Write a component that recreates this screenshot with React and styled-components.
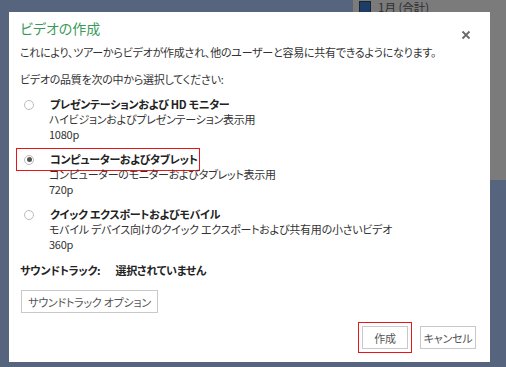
import React from "react";
import styled, { createGlobalStyle } from "styled-components";

const Global = createGlobalStyle`
  html, body { margin: 0; padding: 0; }
  body {
    font-family: "Noto Sans CJK JP", "Noto Sans", sans-serif;
    font-feature-settings: "palt";
  }
`;

const Page = styled.div`
  position: relative;
  width: 506px;
  height: 367px;
  overflow: hidden;
  background: #56657d;
  padding: 12px 0 0 9px;
  box-sizing: border-box;
`;

const Legend = styled.div`
  position: absolute;
  top: 0;
  right: 0;
  width: 153px;
  height: 180px;
  background: #7b7b7b;
  display: flex;
  align-items: flex-start;
  gap: 7px;
  padding: 1px 0 0 6px;
  box-sizing: border-box;
  color: #2e2e2e;
  font-size: 11.5px;
  line-height: 13px;
`;

const Swatch = styled.span`
  width: 10px;
  height: 11px;
  background: #1d3d66;
  border: 1px solid #1a2533;
`;

const Dialog = styled.div`
  position: relative;
  width: 481px;
  height: 350px;
  background: #fff;
  box-sizing: border-box;
  padding: 0 0 0 11px;
  display: flex;
  flex-direction: column;
`;

const Title = styled.div`
  color: #3a9a5b;
  font-size: 14px;
  line-height: 18px;
  margin-top: 7px;
`;

const Close = styled.button`
  position: absolute;
  top: 16px;
  right: 17px;
  width: 14px;
  height: 14px;
  border: 0;
  padding: 0;
  background: transparent;
  display: flex;
  align-items: center;
  justify-content: center;
`;

const Text = styled.div`
  font-size: 11px;
  letter-spacing: -0.25px;
  line-height: 15px;
  white-space: nowrap;
  color: ${(p) => p.$color || "#333"};
  font-weight: ${(p) => (p.$bold ? 700 : 400)};
  margin-top: ${(p) => p.$mt || 0}px;
`;

const OptionList = styled.div`
  display: flex;
  flex-direction: column;
  gap: 10px;
  margin-top: 10px;
`;

const Option = styled.div`
  display: flex;
  flex-direction: column;
`;

const OptionHead = styled.div`
  display: flex;
  align-items: center;
  gap: 16px;
  padding-left: 4px;
  height: 15px;
  width: 176px;
  box-sizing: border-box;
  outline: ${(p) => (p.$highlight ? "1.5px solid #e8151b" : "none")};
  outline-offset: 3px;
`;

const Radio = styled.span`
  width: 10px;
  height: 10px;
  border-radius: 50%;
  border: 1px solid #bcbcbc;
  box-sizing: border-box;
  flex: none;
  display: flex;
  align-items: center;
  justify-content: center;
  &::after {
    content: "";
    width: 5px;
    height: 5px;
    border-radius: 50%;
    background: ${(p) => (p.$checked ? "#555" : "transparent")};
  }
`;

const OptionBody = styled.div`
  padding-left: 29px;
  display: flex;
  flex-direction: column;
`;

const OptionTitle = styled.span`
  font-size: 11px;
  letter-spacing: -0.3px;
  line-height: 15px;
  font-weight: 700;
  color: #222;
  white-space: nowrap;
`;

const SoundRow = styled.div`
  display: flex;
  gap: 15px;
  margin-top: 11px;
`;

const Button = styled.button`
  font-family: inherit;
  font-feature-settings: "palt";
  font-size: 11px;
  letter-spacing: -0.25px;
  color: #555;
  background: #fff;
  border: 1px solid #c9c9c9;
  height: 23px;
  padding: 0;
  white-space: nowrap;
  width: ${(p) => p.$w}px;
  box-sizing: border-box;
  outline: ${(p) => (p.$highlight ? "1.5px solid #e8151b" : "none")};
  outline-offset: 3px;
`;

const SoundButton = styled(Button)`
  align-self: flex-start;
  margin-top: 12px;
  margin-left: 1px;
`;

const Footer = styled.div`
  display: flex;
  justify-content: flex-end;
  gap: 12px;
  padding-right: 14px;
  margin-top: 13px;
`;

export default function App() {
  return (
    <>
      <Global />
      <Page>
        <Legend>
          <Swatch />
          <span>1月 (合計)</span>
        </Legend>
        <Dialog>
          <Title>ビデオの作成</Title>
          <Close aria-label="閉じる">
            <svg width="10" height="10" viewBox="0 0 10 10">
              <path d="M1.5 1.5 L8.5 8.5 M8.5 1.5 L1.5 8.5" stroke="#6a6a6a" strokeWidth="1.8" />
            </svg>
          </Close>
          <Text $mt={8}>
            これにより、ツアーからビデオが作成され、他のユーザーと容易に共有できるようになります。
          </Text>
          <Text $mt={12}>ビデオの品質を次の中から選択してください:</Text>
          <OptionList>
            <Option>
              <OptionHead>
                <Radio />
                <OptionTitle>プレゼンテーションおよび HD モニター</OptionTitle>
              </OptionHead>
              <OptionBody>
                <Text>ハイビジョンおよびプレゼンテーション表示用</Text>
                <Text>1080p</Text>
              </OptionBody>
            </Option>
            <Option>
              <OptionHead $highlight>
                <Radio $checked />
                <OptionTitle>コンピューターおよびタブレット</OptionTitle>
              </OptionHead>
              <OptionBody>
                <Text>コンピューターのモニターおよびタブレット表示用</Text>
                <Text>720p</Text>
              </OptionBody>
            </Option>
            <Option>
              <OptionHead>
                <Radio />
                <OptionTitle>クイック エクスポートおよびモバイル</OptionTitle>
              </OptionHead>
              <OptionBody>
                <Text>モバイル デバイス向けのクイック エクスポートおよび共有用の小さいビデオ</Text>
                <Text>360p</Text>
              </OptionBody>
            </Option>
          </OptionList>
          <SoundRow>
            <Text $bold $color="#222">サウンドトラック:</Text>
            <Text $bold $color="#222">選択されていません</Text>
          </SoundRow>
          <SoundButton $w={137}>サウンドトラック オプション</SoundButton>
          <Footer>
            <Button $highlight $w={46}>作成</Button>
            <Button $w={56}>キャンセル</Button>
          </Footer>
        </Dialog>
      </Page>
    </>
  );
}
